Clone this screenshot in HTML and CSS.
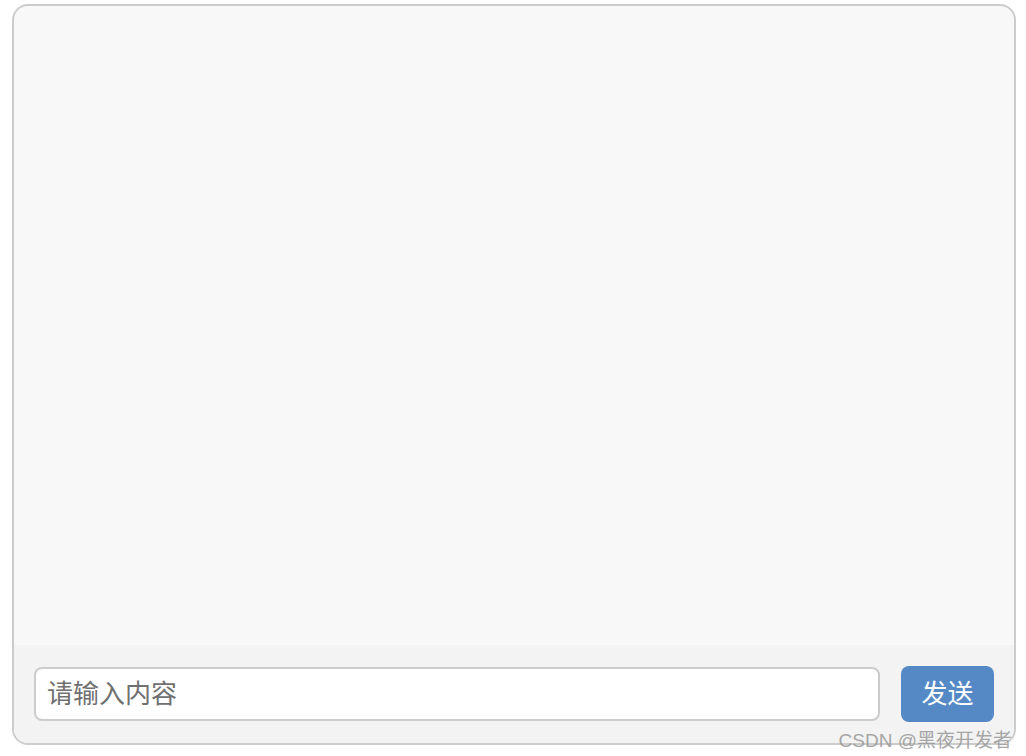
FILE: index.html
```html
<!DOCTYPE html>
<html lang="zh-CN">
<head>
  <meta charset="UTF-8" />
  <meta name="viewport" content="width=device-width, initial-scale=1.0" />
  <title>聊天</title>
  <link rel="stylesheet" href="styles.css">
</head>
<body>
  <div class="chat-box">
    <div class="messages" id="messages"></div>
    <div class="input-bar">
      <input type="text" id="msgInput" placeholder="请输入内容" />
      <div class="send-btn">发送</div>
    </div>
  </div>
  <div class="watermark">CSDN @黑夜开发者</div>
</body>
</html>
```

FILE: styles.css
```css
body {
  font-family: "Liberation Sans", "Noto Sans CJK SC", sans-serif;
  margin: 4px 10px 0 12px;
  background-color: #fff;
}
.chat-box {
  height: 737px;
  border: 2px solid #ccc;
  border-radius: 16px;
  background-color: #f8f8f8;
  display: flex;
  flex-direction: column;
  overflow: hidden;
}
.messages {
  flex: 1;
}
.input-bar {
  display: flex;
  gap: 21px;
  align-items: center;
  padding: 21px 20px 21px 20px;
  background-color: #f3f3f3;
}
.input-bar input {
  flex: 1;
  box-sizing: border-box;
  height: 54px;
  border: 2px solid #ccc;
  border-radius: 8px;
  padding: 0 11px;
  font-size: 26px;
  font-family: "Liberation Sans", "Noto Sans CJK SC", sans-serif;
  background: #fff;
  outline: none;
}
.input-bar input::placeholder {
  color: #707070;
}
.send-btn {
  width: 93px;
  height: 56px;
  line-height: 56px;
  text-align: center;
  background-color: #5589c6;
  color: #fff;
  font-size: 26px;
  border-radius: 8px;
  cursor: pointer;
}
.watermark {
  position: absolute;
  right: 14px;
  top: 725px;
  font-size: 19px;
  color: #999;
  opacity: 0.85;
}
```
